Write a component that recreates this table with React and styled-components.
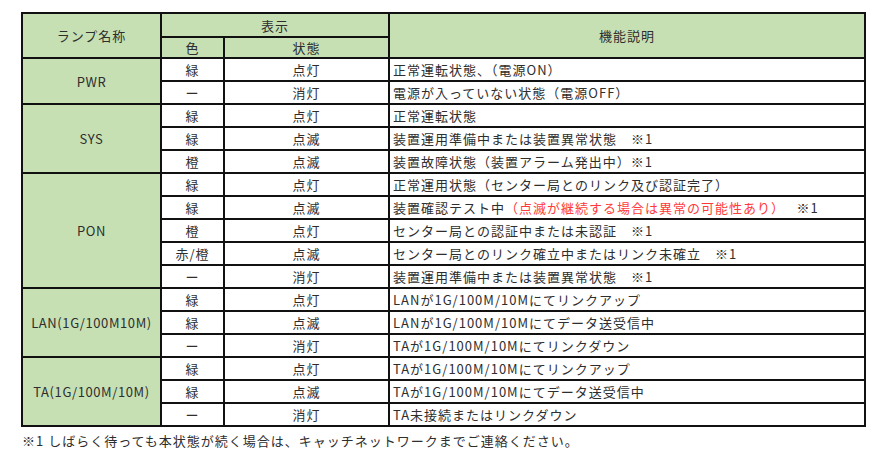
import React from "react";
import styled, { createGlobalStyle } from "styled-components";

const GlobalStyle = createGlobalStyle`
  html, body {
    margin: 0;
    background: #fff;
  }
  body {
    font-family: "Noto Sans CJK JP", "Noto Sans", sans-serif;
    color: #2e2e2e;
  }
`;

const Page = styled.div`
  padding: 12px 0 0 21px;
  width: 888px;
  box-sizing: border-box;
`;

const Table = styled.table`
  border-collapse: collapse;
  table-layout: fixed;
  width: 845px;
  border: 2px solid #111;
  font-size: 13px;
  letter-spacing: 1px;
`;

const HeadCell = styled.th`
  background: #c6e0b4;
  border: 2px solid #111;
  font-weight: normal;
  text-align: center;
  padding: 0;
  height: ${(props) => props.h}px;
  line-height: 1;
`;

const NameCell = styled.td`
  background: #c6e0b4;
  border: 2px solid #111;
  text-align: center;
  padding: 0;
  letter-spacing: 0.6px;
`;

const Cell = styled.td`
  border: 2px solid #111;
  text-align: ${(props) => (props.left ? "left" : "center")};
  padding: 0 ${(props) => (props.left ? "3px" : "0")};
  height: 21px;
  line-height: 1;
  white-space: nowrap;
`;

const Warn = styled.span`
  color: #ff3b3b;
`;

const Note = styled.p`
  margin: 4px 0 0 1px;
  font-size: 13px;
  letter-spacing: 1px;
`;

const groups = [
  {
    name: "PWR",
    rows: [
      ["緑", "点灯", "正常運転状態、（電源ON）"],
      ["ー", "消灯", "電源が入っていない状態（電源OFF）"],
    ],
  },
  {
    name: "SYS",
    rows: [
      ["緑", "点灯", "正常運転状態"],
      ["緑", "点滅", "装置運用準備中または装置異常状態　※1"],
      ["橙", "点滅", "装置故障状態（装置アラーム発出中）※1"],
    ],
  },
  {
    name: "PON",
    rows: [
      ["緑", "点灯", "正常運用状態（センター局とのリンク及び認証完了）"],
      [
        "緑",
        "点滅",
        <>
          装置確認テスト中<Warn>（点滅が継続する場合は異常の可能性あり）</Warn>　 ※1
        </>,
      ],
      ["橙", "点灯", "センター局との認証中または未認証　※1"],
      ["赤/橙", "点滅", "センター局とのリンク確立中またはリンク未確立　※1"],
      ["ー", "消灯", "装置運用準備中または装置異常状態　※1"],
    ],
  },
  {
    name: "LAN(1G/100M10M)",
    rows: [
      ["緑", "点灯", "LANが1G/100M/10Mにてリンクアップ"],
      ["緑", "点滅", "LANが1G/100M/10Mにてデータ送受信中"],
      ["ー", "消灯", "TAが1G/100M/10Mにてリンクダウン"],
    ],
  },
  {
    name: "TA(1G/100M/10M)",
    rows: [
      ["緑", "点灯", "TAが1G/100M/10Mにてリンクアップ"],
      ["緑", "点滅", "TAが1G/100M/10Mにてデータ送受信中"],
      ["ー", "消灯", "TA未接続またはリンクダウン"],
    ],
  },
];

export default function App() {
  return (
    <Page>
      <GlobalStyle />
      <Table>
        <colgroup>
          <col style={{ width: 139 }} />
          <col style={{ width: 63 }} />
          <col style={{ width: 165 }} />
          <col />
        </colgroup>
        <thead>
          <tr>
            <HeadCell rowSpan={2}>ランプ名称</HeadCell>
            <HeadCell colSpan={2} h={22}>
              表示
            </HeadCell>
            <HeadCell rowSpan={2}>機能説明</HeadCell>
          </tr>
          <tr>
            <HeadCell h={19}>色</HeadCell>
            <HeadCell h={19}>状態</HeadCell>
          </tr>
        </thead>
        <tbody>
          {groups.map((group) =>
            group.rows.map((row, i) => (
              <tr key={group.name + i}>
                {i === 0 && <NameCell rowSpan={group.rows.length}>{group.name}</NameCell>}
                <Cell>{row[0]}</Cell>
                <Cell>{row[1]}</Cell>
                <Cell left>{row[2]}</Cell>
              </tr>
            ))
          )}
        </tbody>
      </Table>
      <Note>※1 しばらく待っても本状態が続く場合は、キャッチネットワークまでご連絡ください。</Note>
    </Page>
  );
}
